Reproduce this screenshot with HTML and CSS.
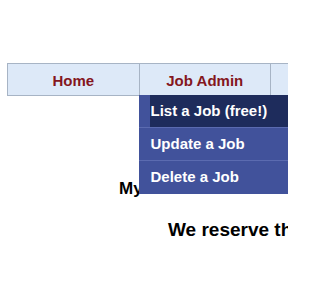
FILE: index.html
```html
<!DOCTYPE html>
<html>
<head>
<meta charset="utf-8">
<link rel="stylesheet" href="styles.css">
</head>
<body>
<div class="page">
  <ul class="nav">
    <li class="nav-item"><a href="#">Home</a></li>
    <li class="nav-item has-menu"><a href="#">Job Admin</a>
      <ul class="menu">
        <li class="menu-item active"><a href="#">List a Job (free!)</a></li>
        <li class="menu-item"><a href="#">Update a Job</a></li>
        <li class="menu-item"><a href="#">Delete a Job</a></li>
      </ul>
    </li>
    <li class="nav-item"><a href="#">Seekers</a></li>
  </ul>
  <div class="content">
    <p class="intro">MyLanecoast.com is free</p>
    <p class="notice">We reserve th</p>
  </div>
</div>
</body>
</html>
```
FILE: styles.css
```css
html, body {
  margin: 0;
  padding: 0;
  overflow: hidden;
  background: #ffffff;
  font-family: "Liberation Sans", Arial, sans-serif;
}
.page {
  box-sizing: border-box;
  width: 288px;
  height: 288px;
  padding: 63px 0 0 7px;
  overflow: hidden;
}
.nav {
  list-style: none;
  margin: 0;
  padding: 0;
  display: flex;
  background: #dde9f8;
  border-top: 1px solid #a7b4c5;
  border-bottom: 1px solid #a7b4c5;
}
.nav-item {
  position: relative;
  width: 130.5px;
  flex: none;
  border-left: 1px solid #a7b4c5;
  text-align: center;
}
.nav-item > a {
  display: block;
  padding-top: 2px;
  height: 29px;
  line-height: 29px;
  color: #841620;
  font-size: 15px;
  font-weight: bold;
  text-decoration: none;
}
.nav-item:last-child > a {
  visibility: hidden;
}
.menu {
  position: absolute;
  top: 100%;
  left: -1px;
  width: 160px;
  margin: 0;
  padding: 0;
  list-style: none;
  background: #41529b;
  text-align: left;
  z-index: 5;
}
.menu-item {
  padding-left: 11px;
  border-bottom: 1px solid #5b6bb0;
}
.menu-item:last-child {
  border-bottom: none;
  height: 33px;
}
.menu-item a {
  display: block;
  height: 32px;
  line-height: 32px;
  padding-left: 1px;
  color: #ffffff;
  font-size: 15px;
  font-weight: bold;
  text-decoration: none;
  white-space: nowrap;
}
.menu-item.active a {
  background: #1e2c5c;
}
.content {
  margin-top: 81px;
}
.intro {
  margin: 0;
  padding-left: 112px;
  white-space: nowrap;
  font-size: 17px;
  line-height: 24px;
  font-weight: bold;
  color: #000;
}
.notice {
  margin: 17px 0 0 0;
  padding-left: 161px;
  white-space: nowrap;
  font-size: 19px;
  line-height: 24px;
  font-weight: bold;
  color: #000;
}
```
